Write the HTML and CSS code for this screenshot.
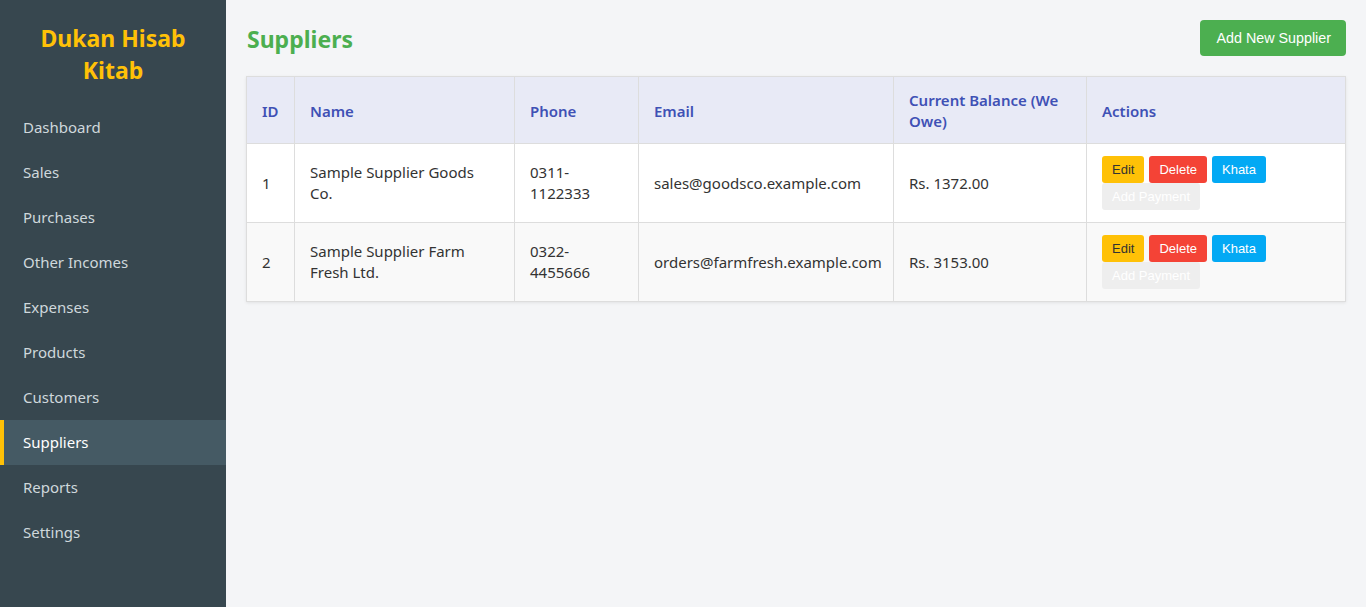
FILE: index.html
```html
<!DOCTYPE html>
<html lang="en">
<head>
<meta charset="utf-8">
<title>Suppliers - Dukan Hisab Kitab</title>
<link rel="stylesheet" href="styles.css">
</head>
<body>
<div class="app">
  <aside class="sidebar">
    <div class="brand">Dukan Hisab Kitab</div>
    <nav class="nav">
      <a class="nav-item" href="#">Dashboard</a>
      <a class="nav-item" href="#">Sales</a>
      <a class="nav-item" href="#">Purchases</a>
      <a class="nav-item" href="#">Other Incomes</a>
      <a class="nav-item" href="#">Expenses</a>
      <a class="nav-item" href="#">Products</a>
      <a class="nav-item" href="#">Customers</a>
      <a class="nav-item active" href="#">Suppliers</a>
      <a class="nav-item" href="#">Reports</a>
      <a class="nav-item" href="#">Settings</a>
    </nav>
  </aside>
  <main class="main">
    <div class="page-header">
      <h1 class="page-title">Suppliers</h1>
      <button class="btn btn-add">Add New Supplier</button>
    </div>
    <table class="data-table">
      <colgroup>
        <col class="c-id"><col class="c-name"><col class="c-phone"><col class="c-email"><col class="c-bal"><col class="c-act">
      </colgroup>
      <thead>
        <tr>
          <th>ID</th><th>Name</th><th>Phone</th><th>Email</th><th>Current Balance (We Owe)</th><th>Actions</th>
        </tr>
      </thead>
      <tbody>
        <tr>
          <td>1</td>
          <td class="name">Sample Supplier Goods Co.</td>
          <td>0311-<br>1122333</td>
          <td>sales@goodsco.example.com</td>
          <td>Rs. 1372.00</td>
          <td class="actions">
            <button class="abtn edit">Edit</button><button class="abtn del">Delete</button><button class="abtn khata">Khata</button><br><button class="abtn pay">Add Payment</button>
          </td>
        </tr>
        <tr>
          <td>2</td>
          <td class="name">Sample Supplier Farm Fresh Ltd.</td>
          <td>0322-<br>4455666</td>
          <td>orders@farmfresh.example.com</td>
          <td>Rs. 3153.00</td>
          <td class="actions">
            <button class="abtn edit">Edit</button><button class="abtn del">Delete</button><button class="abtn khata">Khata</button><br><button class="abtn pay">Add Payment</button>
          </td>
        </tr>
      </tbody>
    </table>
  </main>
</div>
</body>
</html>
```
FILE: styles.css
```css
* { box-sizing: border-box; }
html, body { margin: 0; padding: 0; height: 100%; }
body {
  font-family: "Noto Sans", "Open Sans", sans-serif;
  background: #f4f5f7;
  color: #333;
}
.app { display: flex; min-height: 100vh; }
.sidebar {
  width: 226px;
  flex-shrink: 0;
  background: #37474f;
  padding-top: 22px;
}
.brand {
  color: #ffc107;
  font-weight: 700;
  font-size: 23px;
  line-height: 32px;
  text-align: center;
  padding: 0 30px;
  margin-bottom: 19px;
}
.nav { display: flex; flex-direction: column; }
.nav-item {
  display: block;
  height: 45px;
  line-height: 45px;
  color: #cfd8dc;
  text-decoration: none;
  font-size: 15px;
  border-left: 4px solid transparent;
  padding-left: 19px;
}
.nav-item.active {
  background: #455a64;
  border-left-color: #ffc107;
  color: #fff;
}
.main {
  flex: 1;
  padding: 20px;
}
.page-header {
  display: flex;
  justify-content: space-between;
  align-items: center;
  height: 36px;
  margin-bottom: 20px;
}
.page-title {
  margin: 2px 0 0;
  color: #4caf50;
  font-size: 23px;
  font-weight: 700;
  padding-left: 1px;
}
.btn-add {
  background: #4caf50;
  color: #fff;
  border: none;
  border-radius: 4px;
  height: 36px;
  padding: 0 15px 0 17px;
  font-family: "Liberation Sans", Arial, sans-serif;
  font-size: 14.3px;
}
.data-table {
  width: 100%;
  border-collapse: collapse;
  table-layout: fixed;
  background: #fff;
  box-shadow: 0 1px 3px rgba(0,0,0,0.08);
}
.c-id { width: 48px; }
.c-name { width: 220px; }
.c-phone { width: 124px; }
.c-email { width: 255px; }
.c-bal { width: 193px; }
.data-table th, .data-table td {
  border: 1px solid #ddd;
  padding: 12px 15px;
  text-align: left;
  font-size: 15px;
  line-height: 21px;
  vertical-align: middle;
}
.data-table td.name { padding-right: 20px; }
.data-table th {
  background: #e8eaf6;
  color: #3f51b5;
  font-weight: 600;
  padding-top: 13px;
  padding-bottom: 11px;
}
.data-table td { color: #333; }
.data-table tbody tr:nth-child(even) td { background: #f9f9f9; }
.data-table td.actions { line-height: 0; }
.abtn {
  display: inline-block;
  border: none;
  border-radius: 3px;
  height: 27px;
  padding: 0 10px;
  margin-right: 5px;
  font-family: "Liberation Sans", Arial, sans-serif;
  font-size: 13px;
  line-height: 27px;
  vertical-align: top;
}
.edit { background: #ffc107; color: #333; }
.del { background: #f44336; color: #fff; }
.khata { background: #03a9f4; color: #fff; }
.pay { background: #eee; color: #fff; }
```
